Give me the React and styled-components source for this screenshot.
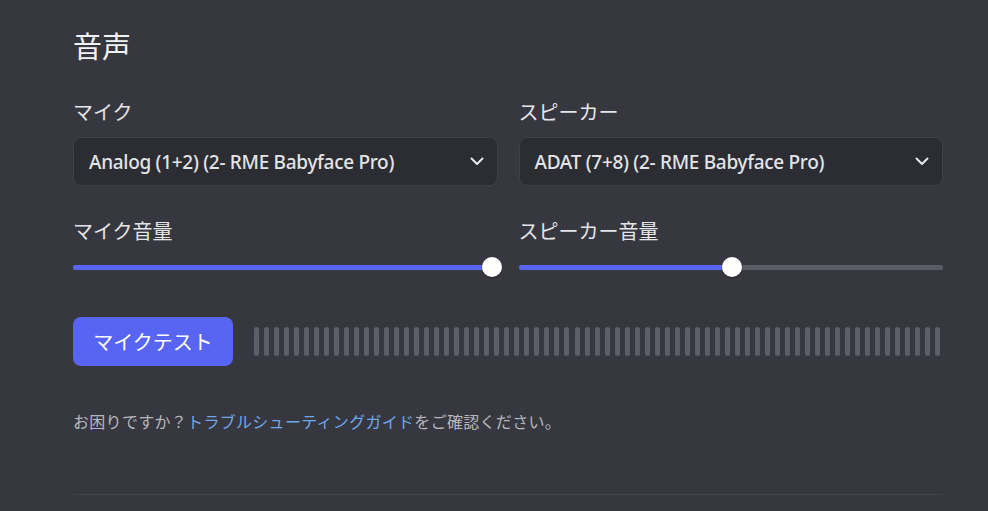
import React from "react";
import styled, { createGlobalStyle } from "styled-components";

const Global = createGlobalStyle`
  html, body { margin: 0; padding: 0; background: #37373f; }
  body { font-family: "Noto Sans", "Noto Sans CJK JP", sans-serif; }
`;

const Page = styled.div`
  width: 988px;
  height: 511px;
  box-sizing: border-box;
  padding: 25px 0 0 73px;
  background: #37373f;
  overflow: hidden;
`;

const Section = styled.div`
  width: 870px;
  display: flex;
  flex-direction: column;
`;

const Title = styled.h2`
  margin: 0;
  font-family: "Noto Sans CJK JP", sans-serif;
  font-size: 29px;
  line-height: 40px;
  font-weight: 400;
  color: #f2f3f5;
`;

const Grid = styled.div`
  display: grid;
  grid-template-columns: 1fr 1fr;
  column-gap: 21px;
  margin-top: ${(p) => p.$mt}px;
`;

const Field = styled.div`
  display: flex;
  flex-direction: column;
`;

const Label = styled.div`
  font-family: "Noto Sans CJK JP", sans-serif;
  font-size: 20px;
  line-height: 24px;
  color: #e3e5e8;
  margin-bottom: ${(p) => p.$mb}px;
`;

const Select = styled.div`
  height: 49px;
  box-sizing: border-box;
  border: 1px solid #3f4048;
  border-radius: 8px;
  background: #2c2d32;
  display: flex;
  align-items: center;
  justify-content: space-between;
  padding: 0 13px 0 15px;
`;

const SelectText = styled.span`
  font-family: "Noto Sans", sans-serif;
  font-weight: 500;
  font-size: 19px;
  letter-spacing: -0.3px;
  color: #e2e4e7;
  white-space: nowrap;
`;

const Chevron = () => (
  <svg width="14" height="9" viewBox="0 0 14 9" fill="none">
    <path d="M1.5 1.5 L7 7 L12.5 1.5" stroke="#e8e9ec" strokeWidth="2" strokeLinecap="round" strokeLinejoin="round" />
  </svg>
);

const SliderWrap = styled.div`
  position: relative;
  height: 24px;
  display: flex;
  align-items: center;
`;

const Track = styled.div`
  position: relative;
  width: 100%;
  height: 5px;
  border-radius: 3px;
  background: #595a63;
`;

const Fill = styled.div`
  position: absolute;
  left: 0;
  top: 0;
  bottom: 0;
  border-radius: 3px;
  background: #5865f2;
`;

const Thumb = styled.div`
  position: absolute;
  top: 50%;
  width: 20px;
  height: 20px;
  margin: -10px 0 0 -10px;
  border-radius: 50%;
  background: #ffffff;
  box-shadow: 0 1px 2px rgba(0, 0, 0, 0.25);
`;

const Slider = ({ pos }) => (
  <SliderWrap>
    <Track>
      <Fill style={{ width: `${pos}px` }} />
      <Thumb style={{ left: `${pos}px` }} />
    </Track>
  </SliderWrap>
);

const TestRow = styled.div`
  display: flex;
  align-items: center;
  margin-top: 38px;
  gap: 21px;
`;

const Button = styled.button`
  flex: none;
  width: 160px;
  height: 49px;
  border: none;
  border-radius: 8px;
  background: #5865f2;
  color: #ffffff;
  font-family: "Noto Sans CJK JP", sans-serif;
  font-size: 20px;
  padding: 0;
  cursor: pointer;
`;

const Meter = styled.div`
  flex: 1;
  display: flex;
  justify-content: space-between;
  align-items: center;
  padding-right: 2px;
`;

const Bar = styled.div`
  width: 5px;
  height: 29px;
  border-radius: 3px;
  background: #5d5e67;
`;

const Help = styled.p`
  margin: 44px 0 0;
  font-family: "Noto Sans CJK JP", sans-serif;
  font-size: 16px;
  line-height: 22px;
  letter-spacing: 0.3px;
  color: #b5b7bd;
`;

const Link = styled.a`
  color: #6ea7ea;
  text-decoration: none;
`;

const Divider = styled.div`
  height: 1px;
  background: #43444c;
  margin-top: 62px;
`;

export default function App() {
  const bars = Array.from({ length: 69 });
  return (
    <>
      <Global />
      <Page>
        <Section>
          <Title>音声</Title>
          <Grid $mt={35}>
            <Field>
              <Label $mb={13}>マイク</Label>
              <Select>
                <SelectText>Analog (1+2) (2- RME Babyface Pro)</SelectText>
                <Chevron />
              </Select>
            </Field>
            <Field>
              <Label $mb={13}>スピーカー</Label>
              <Select>
                <SelectText>ADAT (7+8) (2- RME Babyface Pro)</SelectText>
                <Chevron />
              </Select>
            </Field>
          </Grid>
          <Grid $mt={33}>
            <Field>
              <Label $mb={12}>マイク音量</Label>
              <Slider pos={419} />
            </Field>
            <Field>
              <Label $mb={12}>スピーカー音量</Label>
              <Slider pos={213} />
            </Field>
          </Grid>
          <TestRow>
            <Button>マイクテスト</Button>
            <Meter>
              {bars.map((_, i) => (
                <Bar key={i} />
              ))}
            </Meter>
          </TestRow>
          <Help>
            お困りですか？<Link href="#">トラブルシューティングガイド</Link>をご確認ください。
          </Help>
          <Divider />
        </Section>
      </Page>
    </>
  );
}
